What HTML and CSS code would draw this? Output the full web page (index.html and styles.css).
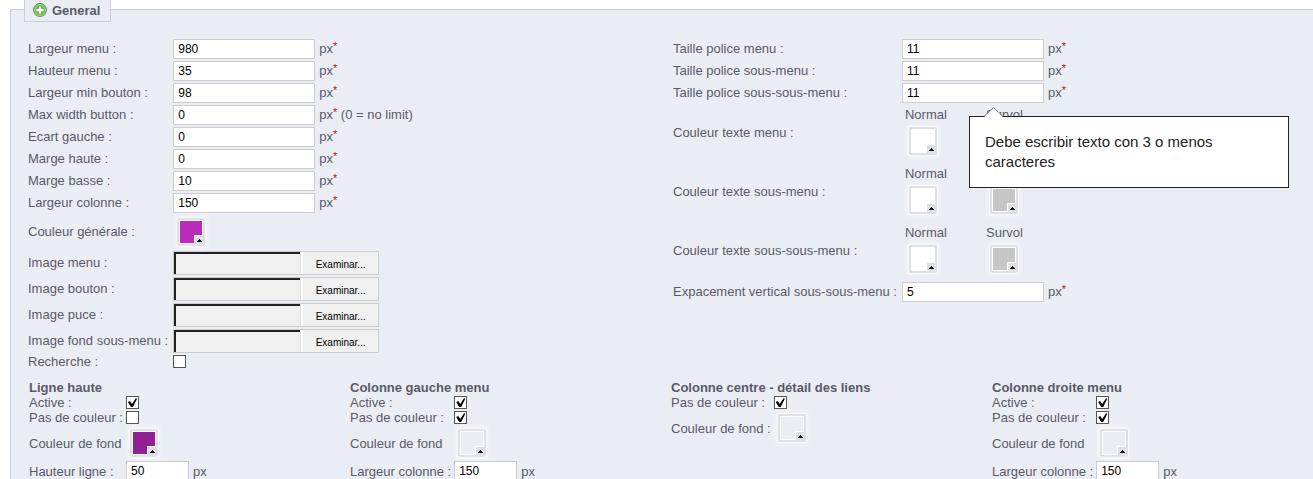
FILE: index.html
```html
<!DOCTYPE html>
<html lang="fr">
<head>
	<meta charset="UTF-8">
	<title>General</title>
	<link rel="stylesheet" href="styles.css">
</head>
<body>

<!-- colour picker button, shared by every swatch -->
<svg class="defs" width="0" height="0">
	<symbol id="swatch" viewBox="0 0 28 28">
		<rect width="28" height="28" rx="2" fill="#dee0e6"/>
		<path d="M2 2H26V18H18V26H2Z" fill="#fff"/>
		<path d="M3 3H25V17H17V25H3Z" fill="currentColor"/>
		<path d="M17 26V17H26V18H18V26Z" fill="#fff"/>
		<path d="M18 18H26V26H18Z" fill="#dee0e6"/>
		<path d="M22 21H23V22H24V23H25V24H20V23H21V22H22Z" fill="#111"/>
	</symbol>
</svg>

<form>
<fieldset class="panel">
	<legend>
		<svg class="add" width="16" height="16" viewBox="0 0 16 16">
			<circle cx="8" cy="8" r="6.500" fill="#6fb85c" stroke="#5b9b50"/>
			<circle cx="8" cy="8" r="5.500" fill="#74bb60" stroke="#a3d094"/>
			<path d="M7 4.500H9V7H11.500V9H9V11.500H7V9H4.500V7H7Z" fill="#fff"/>
		</svg>
		General
	</legend>

	<div class="halves">
		<div class="form">
			<label for="menu_width">Largeur menu :</label>
			<div class="field"><input class="text" id="menu_width" type="text" value="980"> <span>px<sup>*</sup></span></div>
			<label for="menu_height">Hauteur menu :</label>
			<div class="field"><input class="text" id="menu_height" type="text" value="35"> <span>px<sup>*</sup></span></div>
			<label for="button_min">Largeur min bouton :</label>
			<div class="field"><input class="text" id="button_min" type="text" value="98"> <span>px<sup>*</sup></span></div>
			<label for="button_max">Max width button :</label>
			<div class="field"><input class="text" id="button_max" type="text" value="0"> <span>px<sup>*</sup> (0 = no limit)</span></div>
			<label for="left_gap">Ecart gauche :</label>
			<div class="field"><input class="text" id="left_gap" type="text" value="0"> <span>px<sup>*</sup></span></div>
			<label for="margin_top">Marge haute :</label>
			<div class="field"><input class="text" id="margin_top" type="text" value="0"> <span>px<sup>*</sup></span></div>
			<label for="margin_bottom">Marge basse :</label>
			<div class="field"><input class="text" id="margin_bottom" type="text" value="10"> <span>px<sup>*</sup></span></div>
			<label for="column_width">Largeur colonne :</label>
			<div class="field"><input class="text" id="column_width" type="text" value="150"> <span>px<sup>*</sup></span></div>

			<label for="main_color">Couleur générale :</label>
			<div class="field"><button class="swatch purple" id="main_color" type="button"><svg><use href="#swatch"/></svg></button></div>

			<label for="img_menu">Image menu :</label>
			<div class="file"><input id="img_menu" type="text" readonly><button type="button">Examinar...</button></div>
			<label for="img_button">Image bouton :</label>
			<div class="file"><input id="img_button" type="text" readonly><button type="button">Examinar...</button></div>
			<label for="img_bullet">Image puce :</label>
			<div class="file"><input id="img_bullet" type="text" readonly><button type="button">Examinar...</button></div>
			<label for="img_sub">Image fond sous-menu :</label>
			<div class="file"><input id="img_sub" type="text" readonly><button type="button">Examinar...</button></div>

			<label class="tick" for="search">Recherche :</label>
			<input class="check" id="search" type="checkbox">
		</div>

		<div class="form">
			<label for="font_menu">Taille police menu :</label>
			<div class="field"><input class="text" id="font_menu" type="text" value="11"> <span>px<sup>*</sup></span></div>
			<label for="font_sub">Taille police sous-menu :</label>
			<div class="field"><input class="text" id="font_sub" type="text" value="11"> <span>px<sup>*</sup></span></div>
			<label for="font_subsub">Taille police sous-sous-menu :</label>
			<div class="field">
				<input class="text" id="font_subsub" type="text" value="11"> <span>px<sup>*</sup></span>
				<div class="tooltip">
					<svg class="arrow" width="20" height="10" viewBox="0 0 20 10">
						<path d="M0 10L9.500 0.500L19 10Z" fill="#fff"/>
						<path d="M0 9.500L9.500 0.500L19 9.500" fill="none" stroke="#777"/>
					</svg>
					Debe escribir texto con 3 o menos caracteres
				</div>
			</div>

			<span class="colors-label">Couleur texte menu :</span>
			<div class="colors">
				<label>Normal <button class="swatch white" type="button"><svg><use href="#swatch"/></svg></button></label>
				<label>Survol <button class="swatch gray" type="button"><svg><use href="#swatch"/></svg></button></label>
			</div>
			<span class="colors-label">Couleur texte sous-menu :</span>
			<div class="colors">
				<label>Normal <button class="swatch white" type="button"><svg><use href="#swatch"/></svg></button></label>
				<label>Survol <button class="swatch gray" type="button"><svg><use href="#swatch"/></svg></button></label>
			</div>
			<span class="colors-label">Couleur texte sous-sous-menu :</span>
			<div class="colors">
				<label>Normal <button class="swatch white" type="button"><svg><use href="#swatch"/></svg></button></label>
				<label>Survol <button class="swatch gray" type="button"><svg><use href="#swatch"/></svg></button></label>
			</div>

			<label for="spacing">Expacement vertical sous-sous-menu :</label>
			<div class="field"><input class="text" id="spacing" type="text" value="5"> <span>px<sup>*</sup></span></div>
		</div>
	</div>

	<div class="quarters">
		<div class="column">
			<h3>Ligne haute</h3>
			<label for="top_on">Active :</label>
			<input class="check" id="top_on" type="checkbox" checked>
			<label for="top_none">Pas de couleur :</label>
			<input class="check" id="top_none" type="checkbox">
			<label for="top_color">Couleur de fond</label>
			<button class="swatch violet" id="top_color" type="button"><svg><use href="#swatch"/></svg></button>
			<label for="top_height">Hauteur ligne :</label>
			<div class="field"><input class="text short" id="top_height" type="text" value="50"> <span>px</span></div>
		</div>
		<div class="column">
			<h3>Colonne gauche menu</h3>
			<label for="left_on">Active :</label>
			<input class="check" id="left_on" type="checkbox" checked>
			<label for="left_none">Pas de couleur :</label>
			<input class="check" id="left_none" type="checkbox" checked>
			<label for="left_color">Couleur de fond</label>
			<button class="swatch none" id="left_color" type="button"><svg><use href="#swatch"/></svg></button>
			<label for="left_width">Largeur colonne :</label>
			<div class="field"><input class="text short" id="left_width" type="text" value="150"> <span>px</span></div>
		</div>
		<div class="column">
			<h3>Colonne centre - détail des liens</h3>
			<label for="mid_none">Pas de couleur :</label>
			<input class="check" id="mid_none" type="checkbox" checked>
			<label for="mid_color">Couleur de fond :</label>
			<button class="swatch none" id="mid_color" type="button"><svg><use href="#swatch"/></svg></button>
		</div>
		<div class="column">
			<h3>Colonne droite menu</h3>
			<label for="right_on">Active :</label>
			<input class="check" id="right_on" type="checkbox" checked>
			<label for="right_none">Pas de couleur :</label>
			<input class="check" id="right_none" type="checkbox" checked>
			<label for="right_color">Couleur de fond</label>
			<button class="swatch none" id="right_color" type="button"><svg><use href="#swatch"/></svg></button>
			<label for="right_width">Largeur colonne :</label>
			<div class="field"><input class="text short" id="right_width" type="text" value="150"> <span>px</span></div>
		</div>
	</div>
</fieldset>
</form>

</body>
</html>
```
FILE: styles.css
```css
* {
	box-sizing: border-box;
}
body {
	margin: 0;
	background: #fff;
	color: #585a69;
	font-family: "Liberation Sans", Arial, sans-serif;
	font-size: 13px;
	line-height: 15px;
}
input, button {
	margin: 0;
	font-family: inherit;
}
.defs {
	position: absolute;
}

/* panel */
.panel {
	margin: -3px 0 0 10px;
	padding: 17px 0 0 17px;
	border: 1px solid #ccced7;
	border-right: 0;
	border-bottom: 0;
	background: #ebedf4;
}
.panel legend {
	display: flex;
	align-items: center;
	gap: 4px;
	height: 25px;
	margin-left: -4px;
	padding: 1px 10px 0 7px;
	border: 1px solid #ccced7;
	background: #ebedf4;
	font-weight: bold;
}
.halves {
	display: grid;
	grid-template-columns: 1fr 1fr;
	gap: 5px;
}
.form {
	display: grid;
	grid-template-columns: auto 1fr;
	gap: 2px 5px;
	align-items: center;
	align-content: start;
}
.form > label, .form .field span {
	padding-bottom: 2px;
}
.form .tick {
	padding: 0;
	line-height: 13px;
}
.field {
	display: flex;
	align-items: center;
	gap: 4px;
	position: relative;
}
.text {
	width: 142px;
	height: 20px;
	padding: 0 4px;
	border: 1px solid #ccc;
	background: #fff;
	color: #000;
	font-size: 12px;
}
.short {
	width: 63px;
}
sup {
	color: #c00;
	font-size: 11px;
	line-height: 0;
	vertical-align: 3px;
}

/* file pickers */
.file {
	display: flex;
	width: 206px;
	height: 24px;
	border: 1px solid #ccc;
	background: #f0f0f0;
}
.file input {
	width: 126px;
	padding: 0 4px;
	border: 0 solid #222;
	border-width: 2px 0 0 2px;
	box-shadow: 1px 0 #ddd;
	background: #f0f0f0;
}
.file button {
	flex: 1;
	margin-left: 1px;
	padding: 2px 0 0;
	border: 0;
	border-left: 2px solid #fff;
	background: #f0f0f0;
	color: #000;
	font-size: 10px;
}

.check {
	appearance: none;
	width: 13px;
	height: 13px;
	border: 1px solid #555;
	background: #fff;
}
.check:checked::after {
	content: "";
	display: block;
	width: 11px;
	height: 11px;
	background: #000;
	clip-path: polygon(1px 5px, 3px 4px, 5px 7px, 9px 1px, 10px 2px, 6px 10px, 4px 10px);
}

/* colours */
.swatch {
	display: block;
	width: 28px;
	height: 28px;
	margin: 3px 4px;
	padding: 0;
	border: 0;
	border-radius: 2px;
	background: none;
	box-shadow: 0 0 0 1px #f8f9fb, 0 0 4px 2px #f4f5f9;
}
.swatch svg {
	display: block;
	width: 28px;
	height: 28px;
}
.purple { color: #b92cb9; }
.violet { color: #932093; }
.white { color: #fff; }
.gray { color: #c6c6c6; }
.none { color: #ebedf4; }

.colors-label {
	padding-bottom: 3px;
}
.colors {
	display: flex;
	height: 57px;
	padding-left: 3px;
}
.colors label {
	width: 81px;
	line-height: 19px;
}

.tooltip {
	position: absolute;
	z-index: 1;
	top: 33px;
	left: 67px;
	width: 320px;
	padding: 15px;
	border: 1px solid #222;
	background: #fff;
	color: #222;
	font-size: 15px;
	line-height: 20px;
}
.arrow {
	position: absolute;
	top: -10px;
	left: 14px;
}

/* bottom columns */
.quarters {
	display: grid;
	grid-template-columns: repeat(4, 1fr);
	margin-top: 12px;
	padding-left: 1px;
}
.column {
	display: grid;
	grid-template-columns: auto 1fr;
	column-gap: 3px;
	align-items: center;
	align-content: start;
}
.column h3 {
	grid-column: 1 / 3;
	margin: 0;
	font-size: 13px;
}
.column .swatch {
	margin: 4px;
}
```
